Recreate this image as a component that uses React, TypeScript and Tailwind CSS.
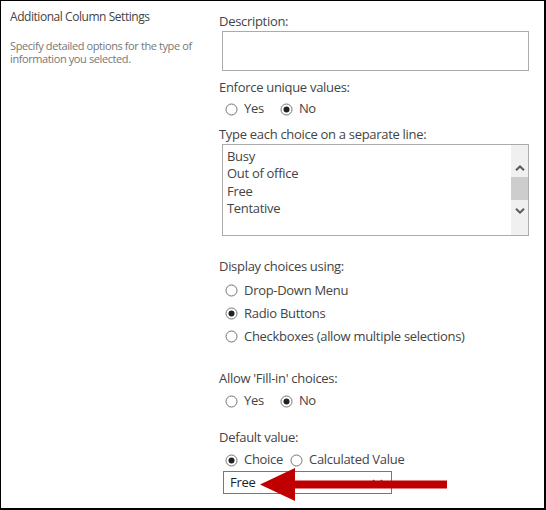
import React from 'react'

const font = { fontFamily: '"Open Sans", "Noto Sans", sans-serif' }

function Radio({ checked = false }: { checked?: boolean }) {
  return (
    <svg width="13" height="13" viewBox="0 0 13 13" className="shrink-0">
      <circle cx="6.5" cy="6.5" r="5.5" fill="#fff" stroke="#737373" strokeWidth="1" />
      {checked && <circle cx="6.5" cy="6.5" r="3" fill="#222" />}
    </svg>
  )
}

function Option({ label, checked, className = '' }: { label: string; checked?: boolean; className?: string }) {
  return (
    <div className={`flex items-center gap-[6px] ${className}`}>
      <Radio checked={checked} />
      <span>{label}</span>
    </div>
  )
}

function Label({ children, className = '' }: { children: React.ReactNode; className?: string }) {
  return <div className={`flex h-[18px] items-center ${className}`}>{children}</div>
}

export default function App() {
  return (
    <div
      style={font}
      className="relative flex h-[510px] w-[546px] border-t border-l border-r-2 border-b-2 border-black bg-white text-[13px] tracking-[-0.3px] text-[#444]"
    >
      {/* left column */}
      <div className="w-[218px] shrink-0 pl-[9px] pt-[7px]">
        <div className="flex h-[18px] items-center text-[12px] tracking-[-0.45px]">Additional Column Settings</div>
        <p className="mt-[13px] text-[11px] leading-[13px] tracking-[-0.4px] text-[#777]">
          Specify detailed options for the type of
          <br />
          information you selected.
        </p>
      </div>

      {/* right column */}
      <div className="flex flex-col pt-[12px]">
        <Label>Description:</Label>
        <div className="ml-[3px] h-[40px] w-[307px] border border-[#ababab]" />

        <Label className="mt-[8px]">Enforce unique values:</Label>
        <div className="mt-[3px] flex h-[18px] items-center pl-[6px]">
          <Option label="Yes" />
          <Option label="No" checked className="ml-[16px]" />
        </div>

        <Label className="mt-[8px]">Type each choice on a separate line:</Label>
        <div className="ml-[3px] flex h-[92px] w-[307px] border border-[#ababab]">
          <div className="flex-1 pl-[4px] pt-[3px] leading-[17.4px]">
            <div>Busy</div>
            <div>Out of office</div>
            <div>Free</div>
            <div>Tentative</div>
          </div>
          <div className="flex w-[17px] flex-col items-center bg-[#f0f0f0] pt-[20px]">
            <svg width="10" height="6" viewBox="0 0 10 6">
              <path d="M1 5.2 L5 1.4 L9 5.2" fill="none" stroke="#5a5a5a" strokeWidth="2" />
            </svg>
            <div className="mt-[6px] h-[23px] w-[17px] bg-[#cdcdcd]" />
            <svg width="10" height="6" viewBox="0 0 10 6" className="mt-[8px]">
              <path d="M1 0.8 L5 4.6 L9 0.8" fill="none" stroke="#5a5a5a" strokeWidth="2" />
            </svg>
          </div>
        </div>

        <Label className="mt-[22px]">Display choices using:</Label>
        <div className="mt-[3px] flex flex-col pl-[6px]">
          <Option label="Drop-Down Menu" className="h-[23px]" />
          <Option label="Radio Buttons" checked className="h-[23px]" />
          <Option label="Checkboxes (allow multiple selections)" className="h-[23px]" />
        </div>

        <Label className="mt-[22px]">Allow 'Fill-in' choices:</Label>
        <div className="mt-[4px] flex h-[18px] items-center pl-[6px]">
          <Option label="Yes" />
          <Option label="No" checked className="ml-[16px]" />
        </div>

        <Label className="mt-[19px]">Default value:</Label>
        <div className="mt-[4px] flex h-[18px] items-center pl-[6px]">
          <Option label="Choice" checked />
          <Option label="Calculated Value" className="ml-[7px]" />
        </div>
        <div className="ml-[4px] mt-[2px] flex h-[23px] w-[169px] items-center justify-between border border-[#2a8dd4] pl-[6px] pr-[8px] text-[#222]">
          <span>Free</span>
          <svg width="11" height="7" viewBox="0 0 11 7">
            <path d="M1 1 L5.5 5.5 L10 1" fill="none" stroke="#555" strokeWidth="1.5" />
          </svg>
        </div>
      </div>

      {/* red arrow overlay */}
      <svg className="absolute left-0 top-0" width="546" height="510" viewBox="0 0 546 510">
        <polygon points="259,483.5 294,467 294,479.5 446,479.5 446,487.5 294,487.5 294,500" fill="#c00000" />
      </svg>
    </div>
  )
}
